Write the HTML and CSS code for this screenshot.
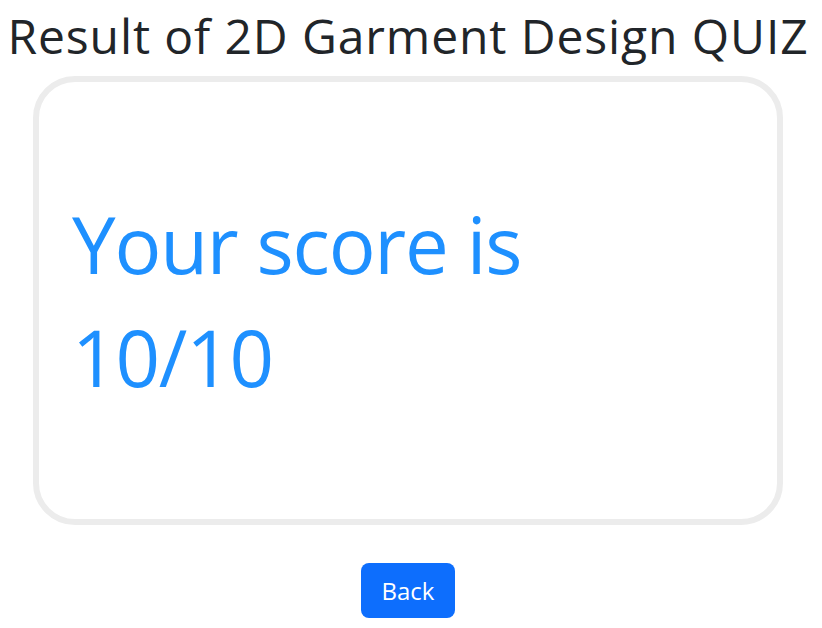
FILE: index.html
```html
<!DOCTYPE html>
<html lang="en">
<head>
<meta charset="utf-8">
<title>Result of 2D Garment Design QUIZ</title>
<link rel="stylesheet" href="styles.css">
</head>
<body>
<div class="page">
  <h1 class="title">Result of 2D Garment Design QUIZ</h1>
  <div class="card">
    <p class="score">Your score is 10/10</p>
  </div>
  <div class="actions">
    <button class="btn" type="button">Back</button>
  </div>
</div>
</body>
</html>
```

FILE: styles.css
```css
html, body {
  margin: 0;
  padding: 0;
  background: #fff;
}
body {
  font-family: "Open Sans", "Noto Sans", sans-serif;
  color: #212529;
}
.page {
  width: 816px;
  display: flex;
  flex-direction: column;
  align-items: center;
}
.title {
  margin: 0;
  height: 76px;
  font-size: 48px;
  font-weight: 400;
  line-height: 72px;
  letter-spacing: 0.9px;
  text-align: center;
  white-space: nowrap;
}
.card {
  box-sizing: border-box;
  width: 750px;
  height: 449px;
  border: 6px solid #ececec;
  border-radius: 42px;
  display: flex;
  align-items: center;
  padding: 0 33px;
}
.score {
  margin: 0;
  max-width: 520px;
  font-size: 78px;
  line-height: 113px;
  color: #1e90ff;
  letter-spacing: -1.2px;
}
.actions {
  margin-top: 38px;
}
.btn {
  font-family: "Open Sans", "Noto Sans", sans-serif;
  font-size: 24px;
  color: #fff;
  background: #0d6efd;
  border: none;
  border-radius: 8px;
  width: 94px;
  height: 55px;
  padding: 0;
  cursor: pointer;
}
```
